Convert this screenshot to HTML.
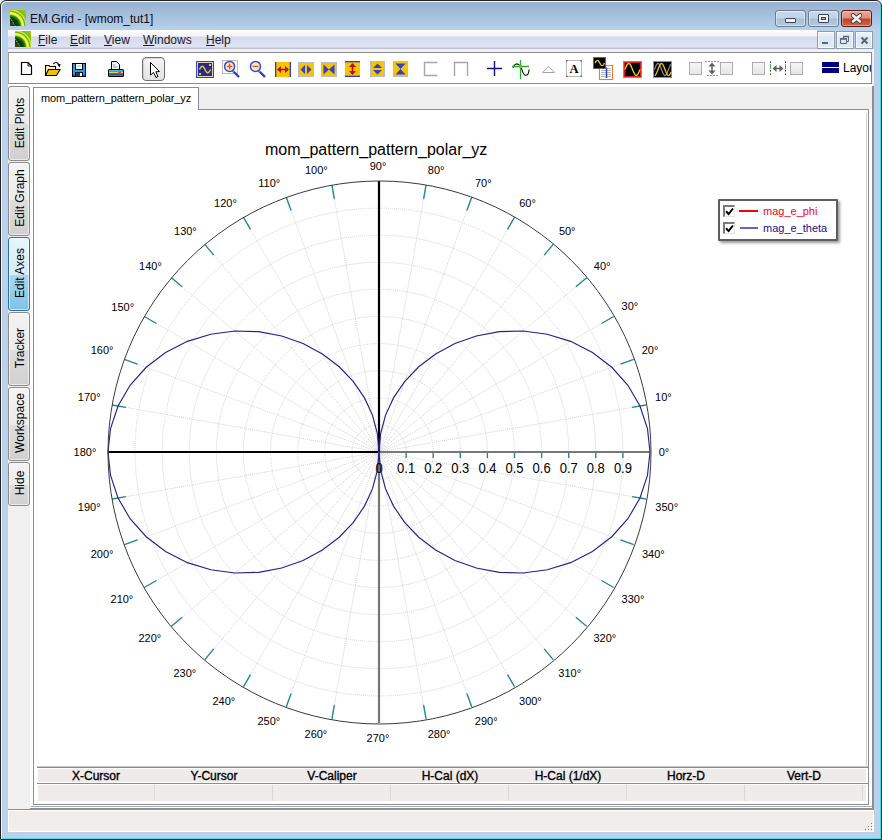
<!DOCTYPE html><html><head><meta charset="utf-8"><style>
*{box-sizing:border-box}
html,body{margin:0;padding:0}
body{width:882px;height:840px;position:relative;overflow:hidden;font-family:"Liberation Sans",sans-serif;background:#f4f4f4}
.a{position:absolute}
</style></head><body>
<div class="a" style="left:0;top:0;width:882px;height:840px;background:#b9d1ea;border:1px solid #222;border-radius:6px 6px 0 0;box-shadow:inset 1px 1px 0 #f4f8fc, inset -1px -1px 0 #39e3f0"></div><div class="a" style="left:2px;top:2px;width:878px;height:28px;border-radius:5px 5px 0 0;background:linear-gradient(#97b0d0,#b8d2ea)"></div><svg class="a" style="left:10px;top:10px" width="16" height="16" viewBox="0 0 16 16"><defs><radialGradient id="lg1" gradientUnits="userSpaceOnUse" cx="0" cy="16" r="20"><stop offset="0" stop-color="#384a10"/><stop offset="0.18" stop-color="#2a4008"/><stop offset="0.28" stop-color="#083008"/><stop offset="0.45" stop-color="#0a5a0a"/><stop offset="0.54" stop-color="#50a010"/><stop offset="0.6" stop-color="#f0fa50"/><stop offset="0.68" stop-color="#e8f440"/><stop offset="0.74" stop-color="#60a810"/><stop offset="0.8" stop-color="#d8f040"/><stop offset="0.88" stop-color="#78b810"/><stop offset="1" stop-color="#98c818"/></radialGradient></defs><rect width="16" height="16" fill="url(#lg1)"/><path d="M0.5 8.5 L5 15.5" stroke="#e8e8d0" stroke-width="0.9" stroke-dasharray="1 1"/></svg><div class="a" style="left:30px;top:12px;font-size:12px;line-height:14px;color:#0c0c18">EM.Grid - [wmom_tut1]</div><div class="a" style="left:775px;top:10px;width:31px;height:17px;border:1px solid #6d7e96;border-radius:3px;box-shadow:inset 0 0 0 1px rgba(255,255,255,0.45);background:linear-gradient(#cbd9ea 0,#c0d2e8 7px,#a8bfd9 8px,#b4cae2 100%)"></div><div class="a" style="left:808px;top:10px;width:31px;height:17px;border:1px solid #6d7e96;border-radius:3px;box-shadow:inset 0 0 0 1px rgba(255,255,255,0.45);background:linear-gradient(#cbd9ea 0,#c0d2e8 7px,#a8bfd9 8px,#b4cae2 100%)"></div><div class="a" style="left:841px;top:10px;width:31px;height:17px;border:1px solid #5a1a1a;border-radius:3px;box-shadow:inset 0 0 0 1px rgba(255,220,210,0.45);background:linear-gradient(#eaa898 0,#e2907e 7px,#c2402a 8px,#d06848 100%)"></div><div class="a" style="left:785px;top:18px;width:11px;height:5px;background:#f4f4f4;border:1px solid #3a4454;border-radius:1px"></div><div class="a" style="left:818px;top:14px;width:11px;height:9px;background:#f4f4f4;border:1px solid #3a4454;border-radius:1px"></div><div class="a" style="left:821px;top:17px;width:5px;height:3px;background:#a8bcd4;border:1px solid #3a4454"></div><svg class="a" style="left:849px;top:12px" width="15" height="13" viewBox="0 0 15 13"><path d="M4 3.4 L11 9.4 M11 3.4 L4 9.4" stroke="#3a3a4a" stroke-width="4.4" stroke-linecap="round"/><path d="M4 3.4 L11 9.4 M11 3.4 L4 9.4" stroke="#f4f4f4" stroke-width="2.6" stroke-linecap="round"/></svg><div class="a" style="left:8px;top:30px;width:809px;height:19px;background:linear-gradient(#ffffff 0px,#f3f4fa 6px,#d5daeb 7px,#dfe3f3 17px,#c0c4d4 18px)"></div><svg class="a" style="left:15px;top:31px" width="16" height="16" viewBox="0 0 16 16"><defs><radialGradient id="lg2" gradientUnits="userSpaceOnUse" cx="0" cy="16" r="20"><stop offset="0" stop-color="#384a10"/><stop offset="0.18" stop-color="#2a4008"/><stop offset="0.28" stop-color="#083008"/><stop offset="0.45" stop-color="#0a5a0a"/><stop offset="0.54" stop-color="#50a010"/><stop offset="0.6" stop-color="#f0fa50"/><stop offset="0.68" stop-color="#e8f440"/><stop offset="0.74" stop-color="#60a810"/><stop offset="0.8" stop-color="#d8f040"/><stop offset="0.88" stop-color="#78b810"/><stop offset="1" stop-color="#98c818"/></radialGradient></defs><rect width="16" height="16" fill="url(#lg2)"/><path d="M0.5 8.5 L5 15.5" stroke="#e8e8d0" stroke-width="0.9" stroke-dasharray="1 1"/></svg><div class="a" style="left:38px;top:33px;font-size:12px;line-height:14px;color:#1a1a2a"><u>F</u>ile</div><div class="a" style="left:70px;top:33px;font-size:12px;line-height:14px;color:#1a1a2a"><u>E</u>dit</div><div class="a" style="left:104px;top:33px;font-size:12px;line-height:14px;color:#1a1a2a"><u>V</u>iew</div><div class="a" style="left:143px;top:33px;font-size:12px;line-height:14px;color:#1a1a2a"><u>W</u>indows</div><div class="a" style="left:206px;top:33px;font-size:12px;line-height:14px;color:#1a1a2a"><u>H</u>elp</div><div class="a" style="left:817px;top:31px;width:18px;height:18px;border:1px solid #8e9cac;background:linear-gradient(#eef4fa 0,#e4edf7 4px,#dbe7f4 5px,#dde9f5 100%);box-shadow:inset 0 0 0 1px rgba(255,255,255,0.7)"></div><div class="a" style="left:836px;top:31px;width:18px;height:18px;border:1px solid #8e9cac;background:linear-gradient(#eef4fa 0,#e4edf7 4px,#dbe7f4 5px,#dde9f5 100%);box-shadow:inset 0 0 0 1px rgba(255,255,255,0.7)"></div><div class="a" style="left:855px;top:31px;width:18px;height:18px;border:1px solid #8e9cac;background:linear-gradient(#eef4fa 0,#e4edf7 4px,#dbe7f4 5px,#dde9f5 100%);box-shadow:inset 0 0 0 1px rgba(255,255,255,0.7)"></div><div class="a" style="left:822px;top:42px;width:6px;height:2px;background:#5c6670"></div><svg class="a" style="left:840px;top:35px" width="11" height="10"><path d="M3.5 1.5h5v5h-1.5 M3.5 1.5v1.5 M0.5 3.5h6v5h-6z" fill="none" stroke="#5c6670" stroke-width="1"/><path d="M3 1.5h6 M0 4h7" stroke="#5c6670" stroke-width="1.5"/></svg><svg class="a" style="left:860px;top:36px" width="9" height="9"><path d="M1.5 1.5L7.5 7.5M7.5 1.5L1.5 7.5" stroke="#5c6670" stroke-width="2"/></svg><div class="a" style="left:8px;top:49px;width:866px;height:783px;background:#f0f0f0"></div><div class="a" style="left:8px;top:52px;width:864px;height:32px;background:#fff;border:1px solid #8a8a8a;border-left-color:#a0a0a0"></div><div class="a" style="left:8px;top:84px;width:865px;height:3px;background:#fff"></div><div class="a" style="left:872px;top:86px;width:2px;height:724px;background:#8f8f8f"></div><div class="a" style="left:30px;top:808px;width:844px;height:2px;background:#8f8f8f"></div><div class="a" style="left:8px;top:809px;width:22px;height:1px;background:#8f8f8f"></div><div class="a" style="left:30px;top:87px;width:842px;height:721px;background:#fff"></div><div class="a" style="left:31px;top:806px;width:841px;height:1px;background:#acacac"></div><div class="a" style="left:34px;top:87px;width:838px;height:22px;background:#efefef"></div><div class="a" style="left:33px;top:109px;width:836px;height:696px;background:#fff;border:1px solid #898c95"></div><div class="a" style="left:866px;top:113px;width:1px;height:653px;background:#d0d0d0"></div><div class="a" style="left:33px;top:87px;width:166px;height:23px;background:#fff;border:1px solid #898c95;border-bottom:none"></div><div class="a" style="left:41px;top:92px;font-size:11px;line-height:13px;color:#000;letter-spacing:-0.1px">mom_pattern_pattern_polar_yz</div><div class="a" style="left:8px;top:810px;width:866px;height:22px;background:#f0edeb;border:1px solid #fff"></div><div class="a" style="left:871px;top:829px;width:1px;height:1px;background:#7a7a7a;box-shadow:1px 1px 0 #fff"></div><div class="a" style="left:868px;top:829px;width:1px;height:1px;background:#7a7a7a;box-shadow:1px 1px 0 #fff"></div><div class="a" style="left:865px;top:829px;width:1px;height:1px;background:#7a7a7a;box-shadow:1px 1px 0 #fff"></div><div class="a" style="left:871px;top:826px;width:1px;height:1px;background:#7a7a7a;box-shadow:1px 1px 0 #fff"></div><div class="a" style="left:868px;top:826px;width:1px;height:1px;background:#7a7a7a;box-shadow:1px 1px 0 #fff"></div><div class="a" style="left:871px;top:823px;width:1px;height:1px;background:#7a7a7a;box-shadow:1px 1px 0 #fff"></div>
<svg class="a" style="left:20px;top:61px" width="14" height="16" viewBox="0 0 14 16"><path d="M1.5 1.5 H8 L11.5 5 V13.5 H1.5 Z" fill="#fff" stroke="#000" stroke-width="1.2"/><path d="M8 1.5 V5 H11.5" fill="none" stroke="#000" stroke-width="0.9"/></svg><svg class="a" style="left:44px;top:61px" width="18" height="16" viewBox="0 0 18 16"><defs><pattern id="chk" width="2" height="2" patternUnits="userSpaceOnUse"><rect width="2" height="2" fill="#f8e8a0"/><rect width="1" height="1" fill="#fff"/><rect x="1" y="1" width="1" height="1" fill="#fff"/></pattern></defs><path d="M1.5 14.5 V4.5 H5 L6 5.5 H11.5 V8.5" fill="url(#chk)" stroke="#000" stroke-width="1.1"/><path d="M1.5 14.5 L4.5 8.5 H16 L12.5 14.5 Z" fill="#f4c000" stroke="#000" stroke-width="1.1"/><path d="M9.3 3.2 Q12 -0.2 15 3.5" fill="none" stroke="#000" stroke-width="1.1"/><path d="M13.2 3.2 L16.6 3 L15.6 6.4 Z" fill="#000"/></svg><svg class="a" style="left:71px;top:62px" width="16" height="16" viewBox="0 0 16 16"><rect x="1" y="1" width="14" height="14" fill="#000"/><rect x="2" y="2" width="12" height="12" fill="#18a4ec"/><rect x="4" y="1" width="8" height="7" fill="#000"/><rect x="5" y="2" width="6" height="5" fill="#fff"/><rect x="6" y="3" width="4" height="2" fill="#d8d8d8"/><rect x="3.5" y="8" width="9" height="1.2" fill="#18a4ec"/><rect x="4" y="10" width="8" height="5" fill="#000"/><rect x="5" y="10.5" width="6" height="4" fill="#383838"/><rect x="9" y="11" width="2" height="3" fill="#fff"/><rect x="2" y="12" width="1.5" height="2" fill="#4848d8"/><rect x="12.5" y="12" width="1.5" height="2" fill="#4848d8"/><rect x="13" y="2" width="1" height="1" fill="#888"/></svg><svg class="a" style="left:107px;top:60px" width="18" height="18" viewBox="0 0 18 18"><path d="M4.5 1.5 H9.5 L12.5 4.5 V9.5 H4.5 Z" fill="#f0f0f0" stroke="#000" stroke-width="1"/><path d="M6 5h2 M6 7h4" stroke="#888" stroke-width="0.8"/><rect x="1" y="9" width="16" height="8" rx="1.5" fill="#000"/><rect x="2" y="10" width="14" height="1.5" fill="#30c0f0"/><rect x="2" y="11.5" width="14" height="1.5" fill="#e0e020"/><rect x="11" y="11.5" width="3" height="1.5" fill="#f04040"/><rect x="2" y="13" width="14" height="1.3" fill="#208080"/><rect x="2" y="14.3" width="14" height="1.7" fill="#4070c8"/></svg><div class="a" style="left:142px;top:57px;width:23px;height:24px;border:1px solid #6f6f6f;border-radius:4px;background:linear-gradient(#f6f6f6,#e2e2e2);box-shadow:inset 1px 1px 1px rgba(0,0,0,0.12)"></div><svg class="a" style="left:149px;top:61px" width="12" height="18" viewBox="0 0 12 18"><path d="M1.5 1.5 L1.5 14 L4.5 11.5 L7 16.5 L9 15.5 L6.8 10.8 L10.5 10.5 Z" fill="#fff" stroke="#000" stroke-width="1"/></svg><svg class="a" style="left:196px;top:61px" width="18" height="17" viewBox="0 0 18 17"><rect x="0.5" y="0.5" width="17" height="16" fill="#f0e8c0" stroke="#3040d0" stroke-width="1.2"/><rect x="2" y="2" width="14" height="13" fill="#2a2a8e"/><polyline points="3.50,8.50 3.96,7.67 4.42,6.90 4.88,6.24 5.33,5.73 5.79,5.41 6.25,5.30 6.71,5.41 7.17,5.73 7.62,6.24 8.08,6.90 8.54,7.67 9.00,8.50 9.46,9.33 9.92,10.10 10.38,10.76 10.83,11.27 11.29,11.59 11.75,11.70 12.21,11.59 12.67,11.27 13.12,10.76 13.58,10.10 14.04,9.33 14.50,8.50" fill="none" stroke="#f0d020" stroke-width="1.4"/><rect x="13" y="3" width="2" height="2" fill="#f0d020"/><rect x="3" y="12" width="2" height="2" fill="#f0d020"/></svg><svg class="a" style="left:221px;top:59px" width="20" height="20" viewBox="0 0 20 20"><rect x="1.5" y="1.5" width="15" height="13" fill="none" stroke="#b8b8b8" stroke-width="1"/><line x1="11.5" y1="11.5" x2="18" y2="18" stroke="#3040c0" stroke-width="2.4"/><line x1="11" y1="11" x2="13" y2="13" stroke="#90c040" stroke-width="1.2"/><circle cx="8.6" cy="7.4" r="5" fill="#f4eccc" stroke="#3a4ad0" stroke-width="1.5"/><path d="M8.6 4.6 V10.2 M5.8 7.4 H11.4" stroke="#f05010" stroke-width="1.4"/></svg><svg class="a" style="left:247px;top:59px" width="20" height="20" viewBox="0 0 20 20"><line x1="11.5" y1="11.5" x2="18" y2="18" stroke="#3040c0" stroke-width="2.4"/><line x1="11" y1="11" x2="13" y2="13" stroke="#90c040" stroke-width="1.2"/><circle cx="8.5" cy="7.4" r="5" fill="#f4eccc" stroke="#3a4ad0" stroke-width="1.5"/><path d="M5.7 7.4 H11.3" stroke="#f05010" stroke-width="1.4"/></svg><svg class="a" style="left:275px;top:62px" width="16" height="15" viewBox="0 0 16 15"><rect x="0" y="0" width="16" height="15" fill="#f8c400"/><rect x="0" y="0" width="1.3" height="15" fill="#3040c0"/><rect x="14.7" y="0" width="1.3" height="15" fill="#3040c0"/><path d="M3 7.5 H13" stroke="#c01010" stroke-width="1.6"/><path d="M2 7.5 L6 4 V11 Z M14 7.5 L10 4 V11 Z" fill="#c01010"/></svg><svg class="a" style="left:298px;top:62px" width="16" height="15" viewBox="0 0 16 15"><rect x="0.5" y="0.5" width="15" height="14" fill="#f8c400" stroke="#bdbdbd"/><path d="M2.5 7.5 L7 3 V12 Z M13.5 7.5 L9 3 V12 Z" fill="#3040d0"/></svg><svg class="a" style="left:321px;top:62px" width="16" height="15" viewBox="0 0 16 15"><rect x="0.5" y="0.5" width="15" height="14" fill="#f8c400" stroke="#bdbdbd"/><path d="M2.5 2.5 L8 7.5 L2.5 12.5 Z M13.5 2.5 L8 7.5 L13.5 12.5 Z" fill="#3040d0"/></svg><svg class="a" style="left:345px;top:61px" width="15" height="16" viewBox="0 0 15 16"><rect x="0" y="0" width="15" height="16" fill="#f8c400"/><rect x="0" y="0" width="15" height="1.3" fill="#3040c0"/><rect x="0" y="14.7" width="15" height="1.3" fill="#3040c0"/><path d="M7.5 3 V13" stroke="#c01010" stroke-width="1.6"/><path d="M7.5 2 L4 6 H11 Z M7.5 14 L4 10 H11 Z" fill="#c01010"/></svg><svg class="a" style="left:370px;top:61px" width="15" height="16" viewBox="0 0 15 16"><rect x="0.5" y="0.5" width="14" height="15" fill="#f8c400" stroke="#bdbdbd"/><path d="M7.5 2.5 L3 7 H12 Z M7.5 13.5 L3 9 H12 Z" fill="#3040d0"/></svg><svg class="a" style="left:393px;top:61px" width="15" height="16" viewBox="0 0 15 16"><rect x="0.5" y="0.5" width="14" height="15" fill="#f8c400" stroke="#bdbdbd"/><path d="M2.5 2.5 H12.5 L7.5 8 Z M2.5 13.5 H12.5 L7.5 8 Z" fill="#3040d0"/></svg><svg class="a" style="left:423px;top:61px" width="16" height="16" viewBox="0 0 16 16"><path d="M14.5 1.5 H1.5 V14.5 H14.5" fill="none" stroke="#a8a8a8" stroke-width="1.4"/></svg><svg class="a" style="left:453px;top:61px" width="16" height="16" viewBox="0 0 16 16"><path d="M1.5 15 V1.5 H14.5 V15" fill="none" stroke="#a8a8a8" stroke-width="1.4"/></svg><svg class="a" style="left:486px;top:60px" width="17" height="17" viewBox="0 0 17 17"><path d="M8.5 1 V16 M1 8.5 H16" stroke="#101080" stroke-width="1.4"/></svg><svg class="a" style="left:511px;top:59px" width="19" height="21" viewBox="0 0 19 21"><path d="M2 8.8 C3.5 4.5 6.5 3.2 9.5 7.5 C11 10 12 16.3 14.5 16.3 C17 16.3 18 13 18 10.5" fill="none" stroke="#000" stroke-width="1.1"/><path d="M9.5 1 V20 M1 7.5 H18" stroke="#20b030" stroke-width="1.3"/><rect x="8" y="6" width="3" height="3" fill="#f07818"/></svg><svg class="a" style="left:541px;top:65px" width="15" height="9" viewBox="0 0 15 9"><path d="M1.6 7.5 L7.5 1.3 L13.4 7.5 Z" fill="none" stroke="#a4a4a4" stroke-width="1"/></svg><svg class="a" style="left:566px;top:60px" width="16" height="17" viewBox="0 0 16 17"><rect x="0.5" y="0.5" width="15" height="16" fill="#fff" stroke="#a8a8a8" stroke-width="0.8"/><rect x="0" y="0" width="1.5" height="1.5" fill="#666"/><rect x="14.5" y="0" width="1.5" height="1.5" fill="#666"/><rect x="0" y="15.5" width="1.5" height="1.5" fill="#666"/><rect x="14.5" y="15.5" width="1.5" height="1.5" fill="#666"/><text x="8" y="12.8" text-anchor="middle" font-family="Liberation Serif" font-weight="bold" font-size="12.5" fill="#000">A</text></svg><svg class="a" style="left:593px;top:57px" width="21" height="24" viewBox="0 0 21 24"><rect x="6.5" y="8.5" width="13" height="14" fill="#fff" stroke="#f07a28" stroke-width="1.1"/><path d="M8 11.5 H18" stroke="#b4b4b4" stroke-width="1"/><path d="M8 13.5 H18" stroke="#b4b4b4" stroke-width="1"/><path d="M8 15.5 H18" stroke="#b4b4b4" stroke-width="1"/><path d="M8 17.5 H18" stroke="#b4b4b4" stroke-width="1"/><path d="M8 19.5 H18" stroke="#b4b4b4" stroke-width="1"/><path d="M13.5 10.5 V21" stroke="#3040d0" stroke-width="1.4"/><rect x="0.5" y="0.5" width="12" height="11" fill="#000" stroke="#666" stroke-width="1"/><polyline points="2.00,6.00 2.40,5.33 2.79,4.70 3.19,4.16 3.58,3.75 3.98,3.49 4.38,3.40 4.77,3.49 5.17,3.75 5.56,4.16 5.96,4.70 6.35,5.33 6.75,6.00 7.15,6.67 7.54,7.30 7.94,7.84 8.33,8.25 8.73,8.51 9.12,8.60 9.52,8.51 9.92,8.25 10.31,7.84 10.71,7.30 11.10,6.67 11.50,6.00" fill="none" stroke="#f0d020" stroke-width="1.3"/></svg><svg class="a" style="left:623px;top:61px" width="19" height="17" viewBox="0 0 19 17"><rect x="0" y="0" width="19" height="17" fill="#8e8e8e"/><rect x="1" y="1" width="17" height="15" fill="#e01818"/><rect x="2" y="2" width="15" height="13" fill="#000"/><polyline points="2.00,8.40 2.50,7.15 3.00,5.96 3.50,4.87 4.00,3.94 4.50,3.20 5.00,2.69 5.50,2.43 6.00,2.43 6.50,2.69 7.00,3.20 7.50,3.94 8.00,4.87 8.50,5.96 9.00,7.15 9.50,8.40 10.00,9.65 10.50,10.84 11.00,11.93 11.50,12.86 12.00,13.60 12.50,14.11 13.00,14.37 13.50,14.37 14.00,14.11 14.50,13.60 15.00,12.86 15.50,11.93 16.00,10.84 16.50,9.65 17.00,8.40" fill="none" stroke="#f0d818" stroke-width="1.3"/></svg><svg class="a" style="left:653px;top:61px" width="19" height="17" viewBox="0 0 19 17"><rect x="0" y="0" width="19" height="17" fill="#8e8e8e"/><rect x="1" y="1" width="17" height="15" fill="#000"/><polyline points="1.50,8.50 2.00,7.16 2.50,5.90 3.00,4.76 3.50,3.81 4.00,3.09 4.50,2.65 5.00,2.50 5.50,2.65 6.00,3.09 6.50,3.81 7.00,4.76 7.50,5.90 8.00,7.16 8.50,8.50 9.00,9.84 9.50,11.10 10.00,12.24 10.50,13.19 11.00,13.91 11.50,14.35 12.00,14.50 12.50,14.35 13.00,13.91 13.50,13.19 14.00,12.24 14.50,11.10 15.00,9.84 15.50,8.50 16.00,7.16 16.50,5.90 17.00,4.76 17.50,3.81 18.00,3.09" fill="none" stroke="#8a8a8a" stroke-width="1.2"/><polyline points="1.50,14.50 2.00,14.35 2.50,13.91 3.00,13.19 3.50,12.24 4.00,11.10 4.50,9.84 5.00,8.50 5.50,7.16 6.00,5.90 6.50,4.76 7.00,3.81 7.50,3.09 8.00,2.65 8.50,2.50 9.00,2.65 9.50,3.09 10.00,3.81 10.50,4.76 11.00,5.90 11.50,7.16 12.00,8.50 12.50,9.84 13.00,11.10 13.50,12.24 14.00,13.19 14.50,13.91 15.00,14.35 15.50,14.50 16.00,14.35 16.50,13.91 17.00,13.19 17.50,12.24 18.00,11.10" fill="none" stroke="#f0c018" stroke-width="1.3"/></svg><div class="a" style="left:689px;top:62px;width:13px;height:13px;border:1px solid #adadad;background:linear-gradient(#f6f6f6,#e6e6e6)"></div><div class="a" style="left:720px;top:62px;width:13px;height:13px;border:1px solid #adadad;background:linear-gradient(#f6f6f6,#e6e6e6)"></div><div class="a" style="left:752px;top:62px;width:13px;height:13px;border:1px solid #adadad;background:linear-gradient(#f6f6f6,#e6e6e6)"></div><div class="a" style="left:790px;top:62px;width:13px;height:13px;border:1px solid #adadad;background:linear-gradient(#f6f6f6,#e6e6e6)"></div><svg class="a" style="left:704px;top:60px" width="16" height="17" viewBox="0 0 16 17"><path d="M1 1.5 H15 M3 15.5 H15" stroke="#40d040" stroke-width="1" stroke-dasharray="2 1"/><path d="M8 4 V13" stroke="#606060" stroke-width="1.5"/><path d="M8 2.5 L4.5 6.5 H11.5 Z M8 14.5 L4.5 10.5 H11.5 Z" fill="#606060"/></svg><svg class="a" style="left:769px;top:60px" width="18" height="17" viewBox="0 0 18 17"><path d="M1.5 1 V16 M16.5 1 V16" stroke="#40d040" stroke-width="1" stroke-dasharray="2 1"/><path d="M1.5 2 V15 M16.5 2 V15" stroke="#000" stroke-width="0.6" stroke-dasharray="1 3"/><path d="M5 8.5 H13" stroke="#606060" stroke-width="1.5"/><path d="M3.5 8.5 L7.5 5 V12 Z M14.5 8.5 L10.5 5 V12 Z" fill="#606060"/></svg><div class="a" style="left:822px;top:62px;width:17px;height:5px;background:#000080"></div><div class="a" style="left:822px;top:68px;width:17px;height:5px;background:#000080"></div><div class="a" style="left:843px;top:61px;width:28px;overflow:hidden;font-size:12px;line-height:14px;color:#000;white-space:nowrap">Layout</div>
<div class="a" style="left:8px;top:86px;width:22px;height:75px;border:1px solid #8a8a8a;border-radius:3px;background:linear-gradient(#f3f3f3 0,#ebebeb 37px,#dedede 37px,#d0d0d0 100%);box-shadow:inset 0 0 0 1px rgba(255,255,255,0.6)"></div><div class="a" style="left:-30px;top:115.5px;width:100px;height:14px;line-height:14px;font-size:12px;text-align:center;color:#000;transform:rotate(-90deg)">Edit Plots</div><div class="a" style="left:8px;top:162px;width:22px;height:74px;border:1px solid #8a8a8a;border-radius:3px;background:linear-gradient(#f3f3f3 0,#ebebeb 37px,#dedede 37px,#d0d0d0 100%);box-shadow:inset 0 0 0 1px rgba(255,255,255,0.6)"></div><div class="a" style="left:-30px;top:191.0px;width:100px;height:14px;line-height:14px;font-size:12px;text-align:center;color:#000;transform:rotate(-90deg)">Edit Graph</div><div class="a" style="left:8px;top:237px;width:22px;height:74px;border:1px solid #2f6e9e;border-radius:3px;background:linear-gradient(#e6f5fc 0,#d5ecf9 37px,#a9d8f2 37px,#7fc2e7 100%);box-shadow:inset 0 0 0 1px rgba(255,255,255,0.6)"></div><div class="a" style="left:-30px;top:266.0px;width:100px;height:14px;line-height:14px;font-size:12px;text-align:center;color:#000;transform:rotate(-90deg)">Edit Axes</div><div class="a" style="left:8px;top:312px;width:22px;height:74px;border:1px solid #8a8a8a;border-radius:3px;background:linear-gradient(#f3f3f3 0,#ebebeb 37px,#dedede 37px,#d0d0d0 100%);box-shadow:inset 0 0 0 1px rgba(255,255,255,0.6)"></div><div class="a" style="left:-30px;top:341.0px;width:100px;height:14px;line-height:14px;font-size:12px;text-align:center;color:#000;transform:rotate(-90deg)">Tracker</div><div class="a" style="left:8px;top:387px;width:22px;height:74px;border:1px solid #8a8a8a;border-radius:3px;background:linear-gradient(#f3f3f3 0,#ebebeb 37px,#dedede 37px,#d0d0d0 100%);box-shadow:inset 0 0 0 1px rgba(255,255,255,0.6)"></div><div class="a" style="left:-30px;top:416.0px;width:100px;height:14px;line-height:14px;font-size:12px;text-align:center;color:#000;transform:rotate(-90deg)">Workspace</div><div class="a" style="left:8px;top:462px;width:22px;height:44px;border:1px solid #8a8a8a;border-radius:3px;background:linear-gradient(#f3f3f3 0,#ebebeb 22px,#dedede 22px,#d0d0d0 100%);box-shadow:inset 0 0 0 1px rgba(255,255,255,0.6)"></div><div class="a" style="left:-30px;top:476.0px;width:100px;height:14px;line-height:14px;font-size:12px;text-align:center;color:#000;transform:rotate(-90deg)">Hide</div>
<div class="a" style="left:37px;top:766px;width:831px;height:1px;background:#c8c8c8"></div><div class="a" style="left:37px;top:767px;width:831px;height:1px;background:#8c8c8c"></div><div class="a" style="left:38px;top:769px;width:828px;height:13px;background:#efebea"></div><div class="a" style="left:37px;top:783px;width:831px;height:1px;background:#8c8c8c"></div><div class="a" style="left:38px;top:785px;width:828px;height:16px;background:#efebea"></div><div class="a" style="left:37px;top:769px;width:118px;text-align:center;font-size:12px;line-height:14px;color:#000;-webkit-text-stroke:0.35px #000">X-Cursor</div><div class="a" style="left:155px;top:769px;width:118px;text-align:center;font-size:12px;line-height:14px;color:#000;-webkit-text-stroke:0.35px #000">Y-Cursor</div><div class="a" style="left:154px;top:785px;width:1px;height:16px;background:#d8d8d8"></div><div class="a" style="left:273px;top:769px;width:118px;text-align:center;font-size:12px;line-height:14px;color:#000;-webkit-text-stroke:0.35px #000">V-Caliper</div><div class="a" style="left:272px;top:785px;width:1px;height:16px;background:#d8d8d8"></div><div class="a" style="left:391px;top:769px;width:118px;text-align:center;font-size:12px;line-height:14px;color:#000;-webkit-text-stroke:0.35px #000">H-Cal (dX)</div><div class="a" style="left:390px;top:785px;width:1px;height:16px;background:#d8d8d8"></div><div class="a" style="left:509px;top:769px;width:118px;text-align:center;font-size:12px;line-height:14px;color:#000;-webkit-text-stroke:0.35px #000">H-Cal (1/dX)</div><div class="a" style="left:508px;top:785px;width:1px;height:16px;background:#d8d8d8"></div><div class="a" style="left:627px;top:769px;width:118px;text-align:center;font-size:12px;line-height:14px;color:#000;-webkit-text-stroke:0.35px #000">Horz-D</div><div class="a" style="left:626px;top:785px;width:1px;height:16px;background:#d8d8d8"></div><div class="a" style="left:745px;top:769px;width:118px;text-align:center;font-size:12px;line-height:14px;color:#000;-webkit-text-stroke:0.35px #000">Vert-D</div><div class="a" style="left:744px;top:785px;width:1px;height:16px;background:#d8d8d8"></div><div class="a" style="left:862px;top:785px;width:1px;height:16px;background:#d8d8d8"></div>
<svg width="882" height="840" style="position:absolute;left:0;top:0"><g fill="none" stroke="#d4d4d4" stroke-width="1" stroke-dasharray="1 1"><circle cx="379" cy="452" r="27.10"/><circle cx="379" cy="452" r="54.20"/><circle cx="379" cy="452" r="81.30"/><circle cx="379" cy="452" r="108.40"/><circle cx="379" cy="452" r="135.50"/><circle cx="379" cy="452" r="162.60"/><circle cx="379" cy="452" r="189.70"/><circle cx="379" cy="452" r="216.80"/><circle cx="379" cy="452" r="243.90"/><line x1="379" y1="452" x2="645.88" y2="404.94"/><line x1="379" y1="452" x2="633.66" y2="359.31"/><line x1="379" y1="452" x2="613.69" y2="316.50"/><line x1="379" y1="452" x2="586.60" y2="277.80"/><line x1="379" y1="452" x2="553.20" y2="244.40"/><line x1="379" y1="452" x2="514.50" y2="217.31"/><line x1="379" y1="452" x2="471.69" y2="197.34"/><line x1="379" y1="452" x2="426.06" y2="185.12"/><line x1="379" y1="452" x2="331.94" y2="185.12"/><line x1="379" y1="452" x2="286.31" y2="197.34"/><line x1="379" y1="452" x2="243.50" y2="217.31"/><line x1="379" y1="452" x2="204.80" y2="244.40"/><line x1="379" y1="452" x2="171.40" y2="277.80"/><line x1="379" y1="452" x2="144.31" y2="316.50"/><line x1="379" y1="452" x2="124.34" y2="359.31"/><line x1="379" y1="452" x2="112.12" y2="404.94"/><line x1="379" y1="452" x2="112.12" y2="499.06"/><line x1="379" y1="452" x2="124.34" y2="544.69"/><line x1="379" y1="452" x2="144.31" y2="587.50"/><line x1="379" y1="452" x2="171.40" y2="626.20"/><line x1="379" y1="452" x2="204.80" y2="659.60"/><line x1="379" y1="452" x2="243.50" y2="686.69"/><line x1="379" y1="452" x2="286.31" y2="706.66"/><line x1="379" y1="452" x2="331.94" y2="718.88"/><line x1="379" y1="452" x2="426.06" y2="718.88"/><line x1="379" y1="452" x2="471.69" y2="706.66"/><line x1="379" y1="452" x2="514.50" y2="686.69"/><line x1="379" y1="452" x2="553.20" y2="659.60"/><line x1="379" y1="452" x2="586.60" y2="626.20"/><line x1="379" y1="452" x2="613.69" y2="587.50"/><line x1="379" y1="452" x2="633.66" y2="544.69"/><line x1="379" y1="452" x2="645.88" y2="499.06"/></g><g stroke="#1e8c8c" stroke-width="1.4"><line x1="632.10" y1="407.37" x2="645.88" y2="404.94"/><line x1="620.50" y1="364.10" x2="633.66" y2="359.31"/><line x1="601.57" y1="323.50" x2="613.69" y2="316.50"/><line x1="575.87" y1="286.80" x2="586.60" y2="277.80"/><line x1="544.20" y1="255.13" x2="553.20" y2="244.40"/><line x1="507.50" y1="229.43" x2="514.50" y2="217.31"/><line x1="466.90" y1="210.50" x2="471.69" y2="197.34"/><line x1="423.63" y1="198.90" x2="426.06" y2="185.12"/><line x1="334.37" y1="198.90" x2="331.94" y2="185.12"/><line x1="291.10" y1="210.50" x2="286.31" y2="197.34"/><line x1="250.50" y1="229.43" x2="243.50" y2="217.31"/><line x1="213.80" y1="255.13" x2="204.80" y2="244.40"/><line x1="182.13" y1="286.80" x2="171.40" y2="277.80"/><line x1="156.43" y1="323.50" x2="144.31" y2="316.50"/><line x1="137.50" y1="364.10" x2="124.34" y2="359.31"/><line x1="125.90" y1="407.37" x2="112.12" y2="404.94"/><line x1="125.90" y1="496.63" x2="112.12" y2="499.06"/><line x1="137.50" y1="539.90" x2="124.34" y2="544.69"/><line x1="156.43" y1="580.50" x2="144.31" y2="587.50"/><line x1="182.13" y1="617.20" x2="171.40" y2="626.20"/><line x1="213.80" y1="648.87" x2="204.80" y2="659.60"/><line x1="250.50" y1="674.57" x2="243.50" y2="686.69"/><line x1="291.10" y1="693.50" x2="286.31" y2="706.66"/><line x1="334.37" y1="705.10" x2="331.94" y2="718.88"/><line x1="423.63" y1="705.10" x2="426.06" y2="718.88"/><line x1="466.90" y1="693.50" x2="471.69" y2="706.66"/><line x1="507.50" y1="674.57" x2="514.50" y2="686.69"/><line x1="544.20" y1="648.87" x2="553.20" y2="659.60"/><line x1="575.87" y1="617.20" x2="586.60" y2="626.20"/><line x1="601.57" y1="580.50" x2="613.69" y2="587.50"/><line x1="620.50" y1="539.90" x2="633.66" y2="544.69"/><line x1="632.10" y1="496.63" x2="645.88" y2="499.06"/><line x1="406.10" y1="452" x2="406.10" y2="458"/><line x1="433.20" y1="452" x2="433.20" y2="458"/><line x1="460.30" y1="452" x2="460.30" y2="458"/><line x1="487.40" y1="452" x2="487.40" y2="458"/><line x1="514.50" y1="452" x2="514.50" y2="458"/><line x1="541.60" y1="452" x2="541.60" y2="458"/><line x1="568.70" y1="452" x2="568.70" y2="458"/><line x1="595.80" y1="452" x2="595.80" y2="458"/><line x1="622.90" y1="452" x2="622.90" y2="458"/></g><line x1="108" y1="452" x2="379" y2="452" stroke="#000" stroke-width="2.2"/><line x1="379" y1="452" x2="650" y2="452" stroke="#777" stroke-width="2.2"/><line x1="379" y1="181" x2="379" y2="452" stroke="#000" stroke-width="2.2"/><line x1="379" y1="452" x2="379" y2="723" stroke="#777" stroke-width="2.2"/><polyline fill="none" stroke="#22228e" stroke-width="1.15" points="650.00,452.00 647.46,428.51 639.98,405.98 627.91,385.30 611.82,367.26 592.45,352.47 570.63,341.36 547.25,334.19 523.21,331.00 499.33,331.67 476.36,335.96 454.95,343.53 435.61,353.95 418.74,366.78 404.63,381.57 393.50,397.89 385.47,415.33 380.62,433.48 379.00,452.00 377.38,433.48 372.53,415.33 364.50,397.89 353.37,381.57 339.26,366.78 322.39,353.95 303.05,343.53 281.64,335.96 258.67,331.67 234.79,331.00 210.75,334.19 187.37,341.36 165.55,352.47 146.18,367.26 130.09,385.30 118.02,405.98 110.54,428.51 108.00,452.00 110.54,475.49 118.02,498.02 130.09,518.70 146.18,536.74 165.55,551.53 187.37,562.64 210.75,569.81 234.79,573.00 258.67,572.33 281.64,568.04 303.05,560.47 322.39,550.05 339.26,537.22 353.37,522.43 364.50,506.11 372.53,488.67 377.38,470.52 379.00,452.00 380.62,470.52 385.47,488.67 393.50,506.11 404.63,522.43 418.74,537.22 435.61,550.05 454.95,560.47 476.36,568.04 499.33,572.33 523.21,573.00 547.25,569.81 570.63,562.64 592.45,551.53 611.82,536.74 627.91,518.70 639.98,498.02 647.46,475.49 650.00,452.00"/><circle cx="379.5" cy="452.5" r="271.5" fill="none" stroke="#3a3a3a" stroke-width="1"/><g font-family="Liberation Sans" font-size="11" fill="#000" text-anchor="middle"><text x="663.9" y="456.0">0&#176;</text><text x="663.4" y="401.1">10&#176;</text><text x="650.0" y="354.0">20&#176;</text><text x="629.9" y="309.8">30&#176;</text><text x="602.1" y="270.0">40&#176;</text><text x="567.2" y="235.1">50&#176;</text><text x="527.5" y="206.6">60&#176;</text><text x="483.3" y="186.9">70&#176;</text><text x="436.1" y="174.2">80&#176;</text><text x="378.0" y="170.0">90&#176;</text><text x="316.3" y="174.2">100&#176;</text><text x="269.2" y="187.4">110&#176;</text><text x="225.5" y="207.4">120&#176;</text><text x="185.4" y="235.3">130&#176;</text><text x="150.5" y="269.9">140&#176;</text><text x="122.7" y="310.5">150&#176;</text><text x="102.1" y="354.4">160&#176;</text><text x="89.2" y="401.0">170&#176;</text><text x="85.0" y="456.2">180&#176;</text><text x="89.2" y="511.2">190&#176;</text><text x="102.1" y="558.1">200&#176;</text><text x="121.9" y="603.3">210&#176;</text><text x="149.8" y="642.3">220&#176;</text><text x="184.8" y="677.0">230&#176;</text><text x="223.8" y="705.0">240&#176;</text><text x="268.8" y="724.8">250&#176;</text><text x="315.9" y="738.1">260&#176;</text><text x="378.0" y="742.0">270&#176;</text><text x="439.1" y="737.9">280&#176;</text><text x="486.2" y="725.0">290&#176;</text><text x="530.4" y="704.5">300&#176;</text><text x="569.7" y="676.6">310&#176;</text><text x="604.8" y="641.5">320&#176;</text><text x="633.0" y="602.8">330&#176;</text><text x="653.3" y="557.6">340&#176;</text><text x="666.7" y="511.0">350&#176;</text></g><g font-family="Liberation Sans" font-size="13" fill="#000" text-anchor="middle"><text transform="translate(379.0 473) scale(1 1.08)">0</text><text transform="translate(406.1 473) scale(1 1.08)">0.1</text><text transform="translate(433.2 473) scale(1 1.08)">0.2</text><text transform="translate(460.3 473) scale(1 1.08)">0.3</text><text transform="translate(487.4 473) scale(1 1.08)">0.4</text><text transform="translate(514.5 473) scale(1 1.08)">0.5</text><text transform="translate(541.6 473) scale(1 1.08)">0.6</text><text transform="translate(568.7 473) scale(1 1.08)">0.7</text><text transform="translate(595.8 473) scale(1 1.08)">0.8</text><text transform="translate(622.9 473) scale(1 1.08)">0.9</text></g><text x="265" y="155" font-family="Liberation Sans" font-size="16" fill="#000">mom_pattern_pattern_polar_yz</text></svg>
<div class="a" style="left:718px;top:199px;width:120px;height:42px;background:#fff;border:2px solid #5e5e5e;border-radius:1px;box-shadow:2px 2px 3px rgba(0,0,0,0.4)"></div><div class="a" style="left:723px;top:205px;width:12px;height:12px;border-style:solid;border-width:2px 1px 1px 2px;border-color:#7a7a7a #e4e4e4 #e4e4e4 #7a7a7a;background:#fff"></div><svg class="a" style="left:725px;top:207px" width="9" height="9"><path d="M1 4.2 L3.6 7 L8 1.5" fill="none" stroke="#000" stroke-width="2"/></svg><div class="a" style="left:723px;top:222px;width:12px;height:12px;border-style:solid;border-width:2px 1px 1px 2px;border-color:#7a7a7a #e4e4e4 #e4e4e4 #7a7a7a;background:#fff"></div><svg class="a" style="left:725px;top:224px" width="9" height="9"><path d="M1 4.2 L3.6 7 L8 1.5" fill="none" stroke="#000" stroke-width="2"/></svg><div class="a" style="left:739px;top:210px;width:19px;height:2px;background:#f00"></div><div class="a" style="left:740px;top:227px;width:18px;height:2px;background:#6868b0"></div><div class="a" style="left:763px;top:205px;font-size:11px;line-height:13px;color:#f2001a">mag_e_phi</div><div class="a" style="left:763px;top:222px;font-size:11px;line-height:13px;color:#16108c">mag_e_theta</div>
</body></html>
